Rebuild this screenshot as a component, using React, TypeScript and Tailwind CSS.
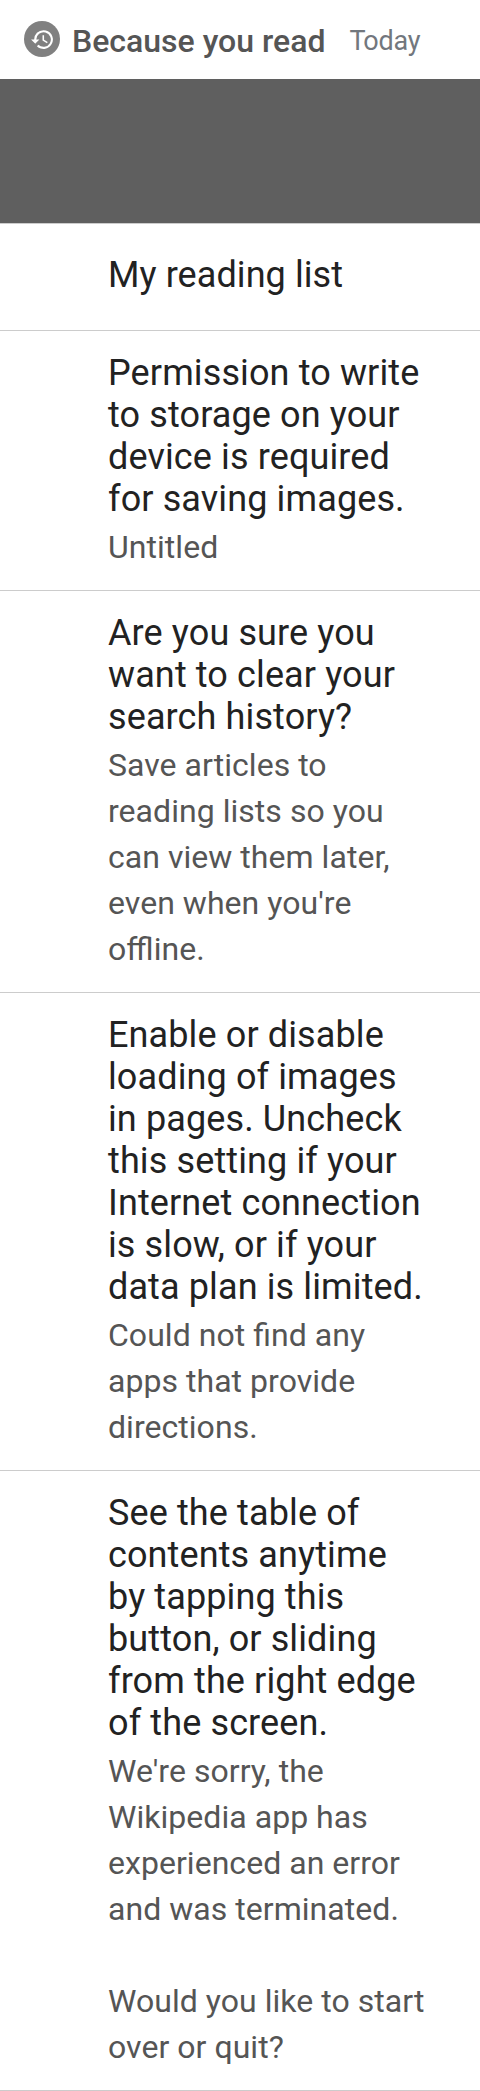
const items = [
  {
    title: ['Permission to write', 'to storage on your', 'device is required', 'for saving images.'],
    text: ['Untitled'],
  },
  {
    title: ['Are you sure you', 'want to clear your', 'search history?'],
    text: ['Save articles to', 'reading lists so you', 'can view them later,', "even when you're", 'offline.'],
  },
  {
    title: ['Enable or disable', 'loading of images', 'in pages. Uncheck', 'this setting if your', 'Internet connection', 'is slow, or if your', 'data plan is limited.'],
    text: ['Could not find any', 'apps that provide', 'directions.'],
  },
  {
    title: ['See the table of', 'contents anytime', 'by tapping this', 'button, or sliding', 'from the right edge', 'of the screen.'],
    text: ["We're sorry, the", 'Wikipedia app has', 'experienced an error', 'and was terminated.', '', 'Would you like to start', 'over or quit?'],
  },
];

export default function App() {
  return (
    <main className="w-[480px] bg-white font-[Roboto,sans-serif] whitespace-nowrap">
      <header className="flex h-[79px] items-center pb-px pl-6">
        <div className="flex size-9 shrink-0 items-center justify-center rounded-full bg-[#808080]">
          <svg viewBox="0 0 24 24" className="size-[25px]" fill="#fff">
            <path d="M13 3a9 9 0 0 0-9 9H1l3.89 3.89.07.14L9 12H6a7 7 0 1 1 2.05 4.94l-1.42 1.42A9 9 0 1 0 13 3zm-1 5v5l4.28 2.54.72-1.21-3.5-2.08V8z" />
          </svg>
        </div>
        <h1 className="ml-3 pt-[3px] text-[32px] font-medium text-[#555]">Because you read</h1>
        <span className="ml-6 pt-[4px] text-[27px] tracking-[-0.2px] text-[#72777d]"><span className="tracking-[-2.2px]">T</span>oday</span>
      </header>
      <div className="h-36 bg-[#5f5f5f]" />
      <section className="flex h-[108px] items-center border-y border-[#ccc] pb-1 pl-[108px] text-[36px] tracking-[0.08px] text-[#222]">
        My reading list
      </section>
      {items.map((item) => (
        <section key={item.title[0]} className="border-b border-[#ccc] pt-[21px] pb-[20px] pl-[108px]">
          <h2 className="text-[36px] leading-[42px] tracking-[0.12px] text-[#222]">
            {item.title.map((line) => <span className="block" key={line}>{line}</span>)}
          </h2>
          <div className="pt-[4px] text-[32px] leading-[46px] tracking-[0.04px] text-[#555] [font-feature-settings:'liga'_1]">
            {item.text.map((line, i) => <span className="block h-[46px]" key={i}>{line}</span>)}
          </div>
        </section>
      ))}
    </main>
  );
}
